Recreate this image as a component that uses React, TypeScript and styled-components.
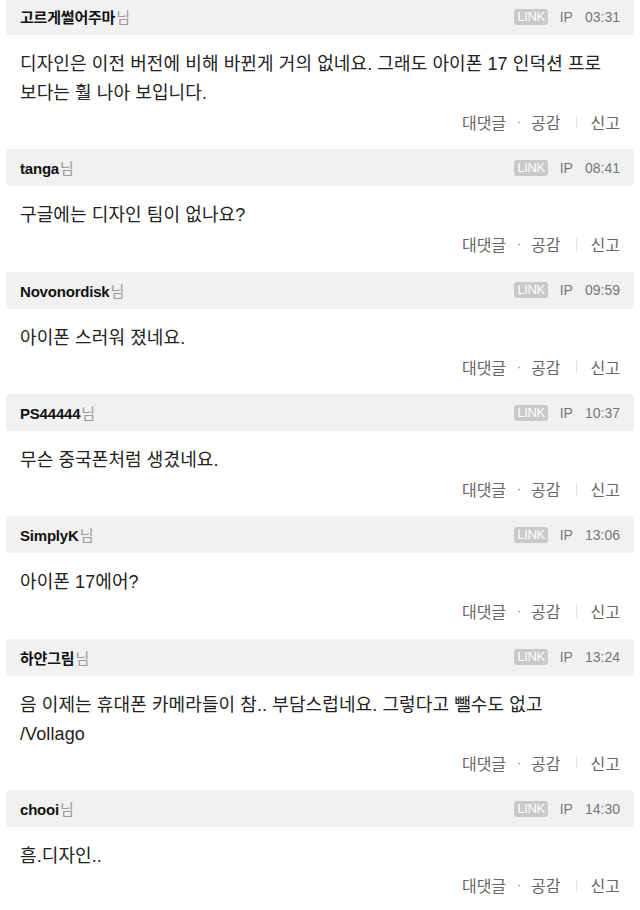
import styled, { createGlobalStyle } from 'styled-components'

const GlobalStyle = createGlobalStyle`
  html, body {
    margin: 0;
    padding: 0;
    background: #ffffff;
  }
  body {
    font-family: 'Liberation Sans', 'Noto Sans CJK KR', sans-serif;
    color: #222222;
  }
`

const List = styled.div`
  display: flex;
  flex-direction: column;
  margin-top: -2px;
  padding: 0 6px;
`

const Comment = styled.div`
  display: flex;
  flex-direction: column;
`

const Header = styled.div`
  display: flex;
  align-items: center;
  justify-content: space-between;
  height: 37px;
  padding: 0 14px 0 14px;
  background: #f1f1f1;
  border-radius: 3px;
`

const Author = styled.div`
  display: flex;
  align-items: baseline;
  font-size: 15px;
  font-weight: bold;
  color: #111111;
  letter-spacing: -0.2px;
  .suffix {
    font-weight: normal;
    color: #9a9a9a;
    margin-left: 1px;
    font-size: 15px;
  }
`

const Meta = styled.div`
  display: flex;
  align-items: center;
  gap: 12px;
  font-size: 14px;
  color: #777777;
`

const Badge = styled.span`
  display: inline-flex;
  align-items: center;
  justify-content: center;
  height: 16px;
  padding: 0 3px;
  border-radius: 3px;
  background: #c9c9c9;
  color: #ffffff;
  font-size: 13px;
  line-height: 16px;
  letter-spacing: -0.4px;
`

const Body = styled.div`
  display: flex;
  flex-direction: column;
  padding: 15px 14px 13.35px 14px;
`

const Text = styled.div`
  font-size: 18px;
  line-height: 29px;
  color: #222222;
  letter-spacing: 0.1px;
  white-space: pre-line;
`

const Actions = styled.div`
  display: flex;
  justify-content: flex-end;
  align-items: center;
  height: 28px;
  font-size: 16px;
  color: #666666;
`

const Dot = styled.span`
  margin: 0 10px 0 11px;
  font-size: 12px;
  color: #777777;
`

const Divider = styled.span`
  width: 1px;
  height: 13px;
  background: #e4e4e4;
  margin: 0 14px 0 15px;
`

type CommentData = {
  author: string
  time: string
  text: string
}

const comments: CommentData[] = [
  {
    author: '고르게썰어주마',
    time: '03:31',
    text: '디자인은 이전 버전에 비해 바뀐게 거의 없네요. 그래도 아이폰 17 인덕션 프로\n보다는 훨 나아 보입니다.',
  },
  { author: 'tanga', time: '08:41', text: '구글에는 디자인 팀이 없나요?' },
  { author: 'Novonordisk', time: '09:59', text: '아이폰 스러워 졌네요.' },
  { author: 'PS44444', time: '10:37', text: '무슨 중국폰처럼 생겼네요.' },
  { author: 'SimplyK', time: '13:06', text: '아이폰 17에어?' },
  {
    author: '하얀그림',
    time: '13:24',
    text: '음 이제는 휴대폰 카메라들이 참.. 부담스럽네요. 그렇다고 뺄수도 없고\n/Vollago',
  },
  { author: 'chooi', time: '14:30', text: '흠.디자인..' },
]

const App = (): JSX.Element => {
  return (
    <>
      <GlobalStyle />
      <List>
        {comments.map((item) => (
          <Comment key={item.author}>
            <Header>
              <Author>
                {item.author}
                <span className="suffix">님</span>
              </Author>
              <Meta>
                <Badge>LINK</Badge>
                <span>IP</span>
                <span>{item.time}</span>
              </Meta>
            </Header>
            <Body>
              <Text>{item.text}</Text>
              <Actions>
                <span>대댓글</span>
                <Dot>·</Dot>
                <span>공감</span>
                <Divider />
                <span>신고</span>
              </Actions>
            </Body>
          </Comment>
        ))}
      </List>
    </>
  )
}

export default App
